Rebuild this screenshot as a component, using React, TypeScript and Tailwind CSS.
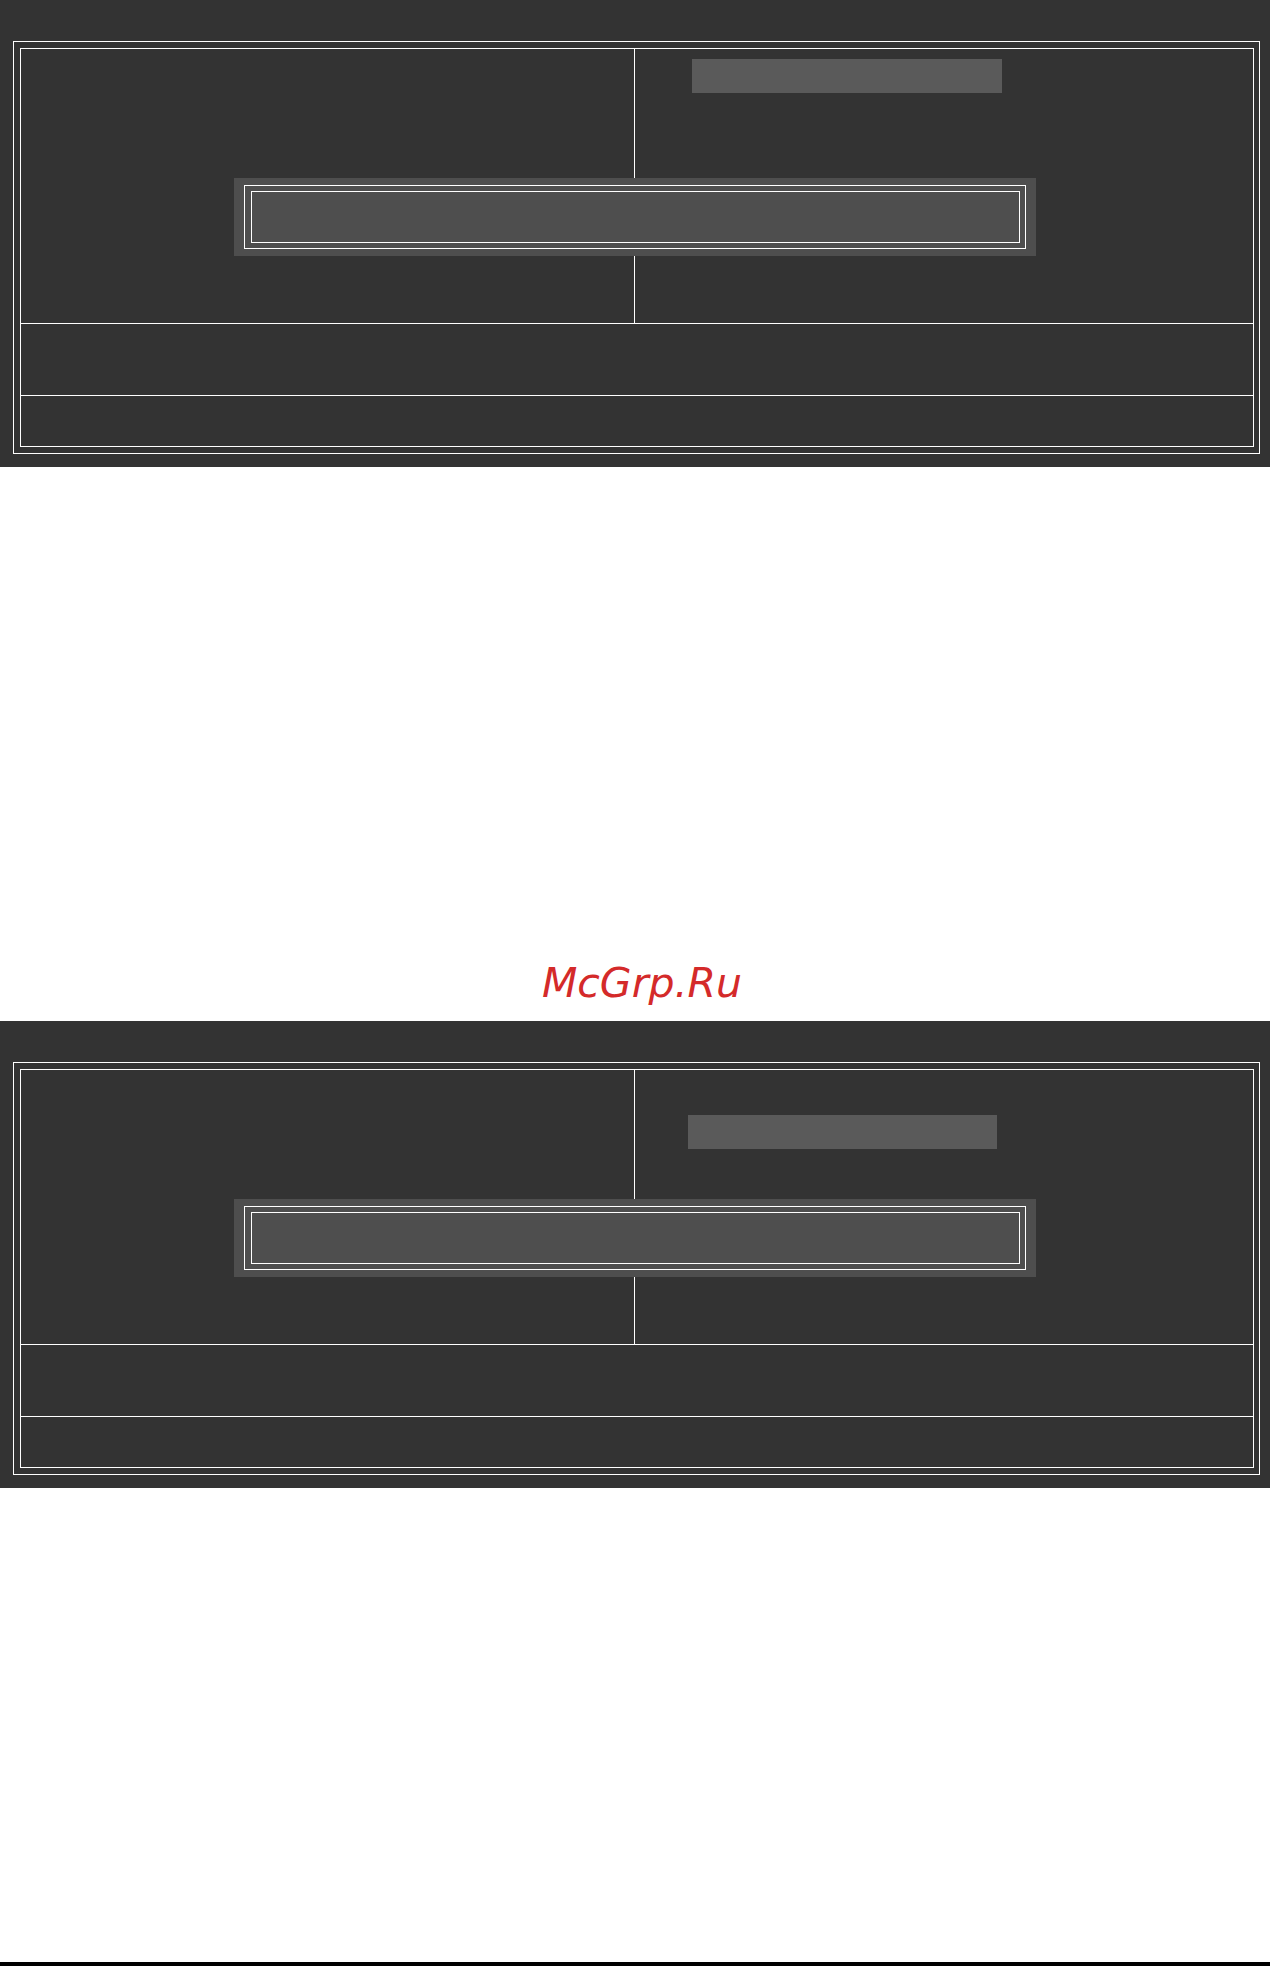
import React from "react";

type PanelProps = {
  barTop: string;
  barLeft: string;
  barWidth: string;
};

function Panel({ barTop, barLeft, barWidth }: PanelProps) {
  return (
    <div className="h-[467px] bg-[#333333] pt-[41px] pl-[13px] pr-[10px]">
      {/* outer double frame */}
      <div className="h-[413px] border border-white p-[6px] pr-[5px]">
        <div className="relative flex h-full flex-col border border-white">
          {/* top split section */}
          <div className="grid h-[274px] grid-cols-[613px_1px_1fr]">
            <div />
            <div className="bg-white" />
            <div>
              <div className={`${barTop} ${barLeft} ${barWidth} h-[34px] bg-[#5a5a5a]`} />
            </div>
          </div>
          <div className="h-[72px] border-t border-white" />
          <div className="flex-1 border-t border-white" />

          {/* dialog box over the split */}
          <div className="absolute left-[213px] top-[129px] h-[78px] w-[802px] bg-[#4e4e4e] px-[10px] py-[7px]">
            <div className="h-full border border-white p-[5px] pl-[6px]">
              <div className="h-full border border-white bg-[#4e4e4e]" />
            </div>
          </div>
        </div>
      </div>
    </div>
  );
}

export default function App() {
  return (
    <div className="relative min-h-[1966px] w-[1270px] bg-white">
      <Panel barTop="mt-[10px]" barLeft="ml-[57px]" barWidth="w-[310px]" />

      <div className="flex h-[554px] items-end justify-center pb-[17px] pl-[14px]">
        <span className="text-[41px] leading-[41px] italic text-[#d42a2a] [font-family:'DejaVu_Sans',sans-serif]">
          McGrp.Ru
        </span>
      </div>

      <Panel barTop="mt-[45px]" barLeft="ml-[53px]" barWidth="w-[309px]" />

      <div className="h-[474px]" />
      <div className="h-[4px] bg-black" />
    </div>
  );
}
